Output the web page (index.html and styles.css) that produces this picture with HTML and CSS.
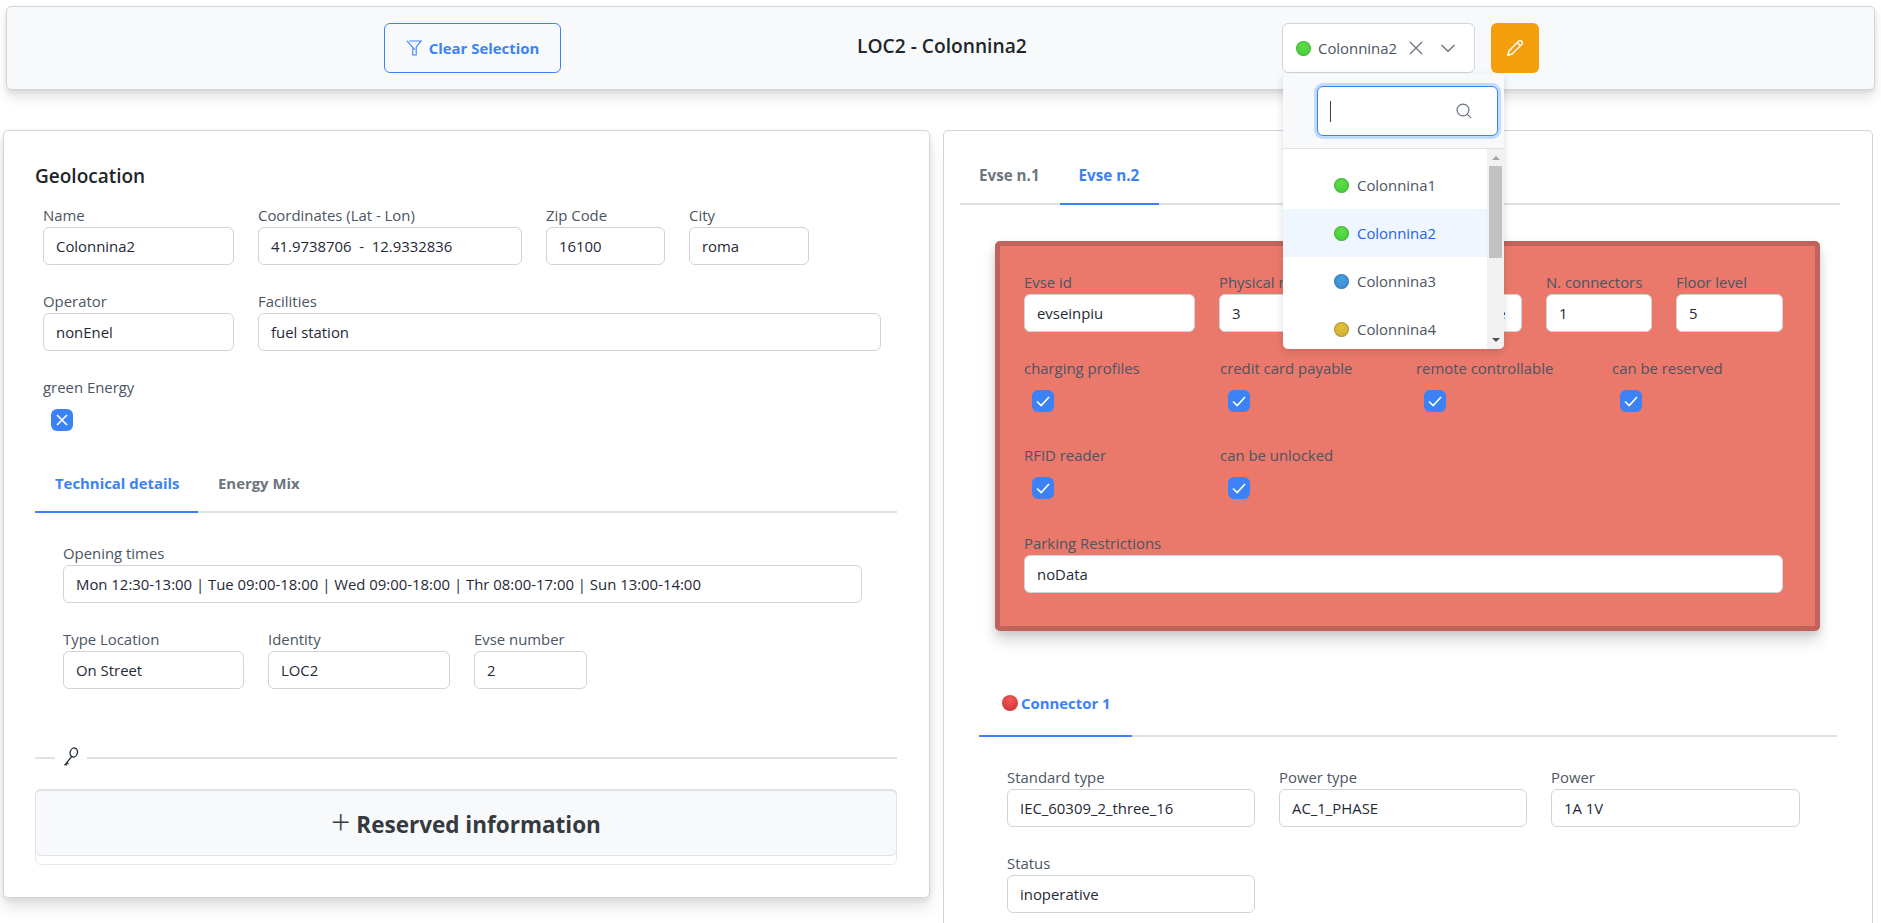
FILE: index.html
```html
<!DOCTYPE html>
<html lang="en">
  <head>
    <meta charset="utf-8" />
    <title>LOC2 - Colonnina2</title>
    <link rel="stylesheet" href="styles.css">
  </head>
  <body>
    <header class="topbar">
      <button type="button" class="btn-clear">
        <svg class="ico-filter" viewBox="0 0 16 16" width="16" height="16" fill="none" stroke="#3b82f6" stroke-width="1.1">
          <path d="M3.2 1H15L10.2 7V15H6.8V8.2" />
          <path d="M1 0.8L8.8 9.6" />
        </svg>
        Clear Selection
      </button>
      <h1 class="title">LOC2 - Colonnina2</h1>
      <div class="select-wrap">
        <div class="select">
          <span class="dot dot-green"></span>
          <span class="select-label">Colonnina2</span>
          <svg class="ico-times" viewBox="0 0 16 16" width="16" height="16" fill="none" stroke="#6b7280" stroke-width="1.3">
            <path d="M2 2L14 14M14 2L2 14" />
          </svg>
          <svg class="ico-chevron" viewBox="0 0 16 16" width="16" height="16" fill="none" stroke="#6b7280" stroke-width="1.4">
            <path d="M1.5 5L8 11.2L14.5 5" />
          </svg>
        </div>
        <div class="dropdown">
          <div class="dropdown-head">
            <div class="search">
              <span class="caret"></span>
              <svg viewBox="0 0 16 16" width="16" height="16" fill="none" stroke="#6b7280" stroke-width="1.2">
                <circle cx="7" cy="7" r="5.9" />
                <path d="M11.3 11.3L15.2 15.2" />
              </svg>
            </div>
          </div>
          <div class="dropdown-body">
            <ul class="options">
              <li class="option"><span class="dot dot-green"></span>Colonnina1</li>
              <li class="option is-selected"><span class="dot dot-green"></span>Colonnina2</li>
              <li class="option"><span class="dot dot-blue"></span>Colonnina3</li>
              <li class="option"><span class="dot dot-yellow"></span>Colonnina4</li>
            </ul>
            <div class="scrollbar">
              <span class="arrow-up"></span>
              <span class="thumb"></span>
              <span class="arrow-down"></span>
            </div>
          </div>
        </div>
      </div>
      <button type="button" class="btn-edit" aria-label="Edit">
        <svg viewBox="0 0 16 16" width="18" height="18" fill="none" stroke="#fff" stroke-width="1.3" stroke-linejoin="round">
          <path d="M1.6 14.4L2.6 10.6L11.4 1.8C12 1.2 13 1.2 13.6 1.8L14.2 2.4C14.8 3 14.8 4 14.2 4.6L5.4 13.4Z" />
          <path d="M10 3.2L12.8 6" />
        </svg>
      </button>
    </header>

    <main class="columns">
      <section class="card card-left">
        <h2 class="card-title">Geolocation</h2>
        <div class="fields">
          <div class="row">
            <div class="field w-191"><label>Name</label><div class="ctl">Colonnina2</div></div>
            <div class="field w-264"><label>Coordinates (Lat - Lon)</label><div class="ctl">41.9738706 &nbsp;-&nbsp; 12.9332836</div></div>
            <div class="field w-119"><label>Zip Code</label><div class="ctl">16100</div></div>
            <div class="field w-120"><label>City</label><div class="ctl">roma</div></div>
          </div>
          <div class="row">
            <div class="field w-191"><label>Operator</label><div class="ctl">nonEnel</div></div>
            <div class="field w-623"><label>Facilities</label><div class="ctl">fuel station</div></div>
          </div>
          <div class="check-field">
            <label>green Energy</label>
            <span class="check">
              <svg viewBox="0 0 22 22" width="22" height="22" fill="none" stroke="#fff" stroke-width="1.6"><path d="M6 6L16 16M16 6L6 16" /></svg>
            </span>
          </div>
        </div>

        <div class="tabs tabs-tech">
          <a class="tab tab-tech is-active">Technical details</a>
          <a class="tab tab-mix">Energy Mix</a>
        </div>
        <div class="tab-panel">
          <div class="field w-799"><label>Opening times</label><div class="ctl">Mon 12:30-13:00 | Tue 09:00-18:00 | Wed 09:00-18:00 | Thr 08:00-17:00 | Sun 13:00-14:00</div></div>
          <div class="row">
            <div class="field w-181"><label>Type Location</label><div class="ctl">On Street</div></div>
            <div class="field w-182"><label>Identity</label><div class="ctl">LOC2</div></div>
            <div class="field w-113"><label>Evse number</label><div class="ctl">2</div></div>
          </div>
        </div>

        <div class="divider">
          <span class="divider-icon">
            <svg viewBox="0 0 16 19" width="16" height="19" fill="none" stroke="#1f2937" stroke-width="1.3">
              <ellipse cx="10.8" cy="5.5" rx="3.6" ry="4.6" transform="rotate(15 10.8 5.5)" />
              <path d="M8.6 9.6L1.5 18.4M3.8 15.6L5.6 17M2.6 17L4 18.2" />
            </svg>
          </span>
        </div>

        <div class="accordion">
          <div class="accordion-head"><span class="plus">+</span> Reserved information</div>
        </div>
      </section>

      <section class="card card-right">
        <div class="tabs tabs-evse">
          <a class="tab tab-evse">Evse n.1</a>
          <a class="tab tab-evse is-active">Evse n.2</a>
        </div>

        <div class="evse-panel">
          <div class="row">
            <div class="field w-171"><label>Evse id</label><div class="ctl">evseinpiu</div></div>
            <div class="field w-171"><label>Physical reference</label><div class="ctl">3</div></div>
            <div class="field w-108"><label>&nbsp;</label><div class="ctl">inoperative</div></div>
            <div class="field w-106"><label>N. connectors</label><div class="ctl">1</div></div>
            <div class="field w-107"><label>Floor level</label><div class="ctl">5</div></div>
          </div>
          <div class="check-grid">
            <div class="check-field"><label>charging profiles</label><span class="check"><svg viewBox="0 0 22 22" width="22" height="22" fill="none" stroke="#fff" stroke-width="1.6"><path d="M5 11.5L9.2 15.5L17 7" /></svg></span></div>
            <div class="check-field"><label>credit card payable</label><span class="check"><svg viewBox="0 0 22 22" width="22" height="22" fill="none" stroke="#fff" stroke-width="1.6"><path d="M5 11.5L9.2 15.5L17 7" /></svg></span></div>
            <div class="check-field"><label>remote controllable</label><span class="check"><svg viewBox="0 0 22 22" width="22" height="22" fill="none" stroke="#fff" stroke-width="1.6"><path d="M5 11.5L9.2 15.5L17 7" /></svg></span></div>
            <div class="check-field"><label>can be reserved</label><span class="check"><svg viewBox="0 0 22 22" width="22" height="22" fill="none" stroke="#fff" stroke-width="1.6"><path d="M5 11.5L9.2 15.5L17 7" /></svg></span></div>
            <div class="check-field"><label>RFID reader</label><span class="check"><svg viewBox="0 0 22 22" width="22" height="22" fill="none" stroke="#fff" stroke-width="1.6"><path d="M5 11.5L9.2 15.5L17 7" /></svg></span></div>
            <div class="check-field"><label>can be unlocked</label><span class="check"><svg viewBox="0 0 22 22" width="22" height="22" fill="none" stroke="#fff" stroke-width="1.6"><path d="M5 11.5L9.2 15.5L17 7" /></svg></span></div>
          </div>
          <div class="field field-parking"><label>Parking Restrictions</label><div class="ctl">noData</div></div>
        </div>

        <div class="tabs tabs-connector">
          <a class="tab tab-connector is-active"><span class="dot dot-red"></span>Connector 1</a>
        </div>
        <div class="connector-panel">
          <div class="row">
            <div class="field w-248"><label>Standard type</label><div class="ctl">IEC_60309_2_three_16</div></div>
            <div class="field w-248"><label>Power type</label><div class="ctl">AC_1_PHASE</div></div>
            <div class="field w-249"><label>Power</label><div class="ctl">1A 1V</div></div>
          </div>
          <div class="row">
            <div class="field w-248"><label>Status</label><div class="ctl">inoperative</div></div>
          </div>
        </div>
      </section>
    </main>
  </body>
</html>
```

FILE: styles.css
```css
* {
  box-sizing: border-box;
}

html,
body {
  height: 100%;
}

body {
  margin: 0;
  padding-top: 6px;
  overflow: hidden;
  background: #fff;
  color: #1f2937;
  font-family: "Open Sans", "Noto Sans", sans-serif;
  font-size: 14.9px;
}

/* top bar */
.topbar {
  display: flex;
  align-items: center;
  width: 1869px;
  height: 84px;
  margin-left: 6px;
  padding-left: 377px;
  background: #f8f9fa;
  border: 1px solid #d1d5db;
  border-radius: 5px;
  box-shadow: 0 8px 12px rgba(0, 0, 0, 0.1), 0 2px 4px rgba(0, 0, 0, 0.08);
}

.btn-clear {
  display: flex;
  flex: none;
  align-items: center;
  justify-content: center;
  gap: 7px;
  width: 177px;
  height: 50px;
  padding: 0;
  background: transparent;
  border: 1px solid #3b82f6;
  border-radius: 6px;
  color: #3b82f6;
  font: 700 14.9px "Open Sans", sans-serif;
}

.title {
  flex: none;
  width: 170px;
  margin: 0 0 6px 296px;
  font-size: 19.2px;
  font-weight: 600;
  white-space: nowrap;
  color: #212529;
}

.select-wrap {
  position: relative;
  flex: none;
  margin-left: 255px;
}

.select {
  display: flex;
  align-items: center;
  width: 193px;
  height: 50px;
  padding-left: 13px;
  background: #fff;
  border: 1px solid #d1d5db;
  border-radius: 6px;
  color: #4b5563;
}

.select-label {
  margin-left: 7px;
}

.ico-times {
  margin-left: 11px;
}

.ico-chevron {
  margin-left: 16px;
}

.btn-edit {
  display: flex;
  flex: none;
  align-items: center;
  justify-content: center;
  width: 48px;
  height: 50px;
  margin-left: 16px;
  padding: 0;
  background: #f59e0b;
  border: 0;
  border-radius: 6px;
}

.dot {
  display: inline-block;
  flex: none;
  width: 15px;
  height: 15px;
  border-radius: 50%;
}

.dot-green {
  background: radial-gradient(circle at 50% 35%, #5fdc4c, #3ec832);
  box-shadow: inset 0 0 0 1px rgba(60, 140, 50, 0.35);
}

.dot-blue {
  background: radial-gradient(circle at 50% 35%, #44a2e0, #3a82cf);
  box-shadow: inset 0 0 0 1px rgba(50, 90, 150, 0.35);
}

.dot-yellow {
  background: radial-gradient(circle at 50% 35%, #e0c23a, #c9a936);
  box-shadow: inset 0 0 0 1px rgba(130, 110, 50, 0.35);
}

.dot-red {
  width: 16px;
  height: 16px;
  background: radial-gradient(circle at 50% 30%, #ee5a5a, #cf2a2f);
}

/* dropdown */
.dropdown {
  position: absolute;
  top: 51px;
  left: 1px;
  z-index: 10;
  width: 221px;
  height: 275px;
  overflow: hidden;
  background: #fff;
  border-radius: 0 0 5px 5px;
  box-shadow: 0 3px 8px rgba(0, 0, 0, 0.14);
}

.dropdown-head {
  display: flex;
  justify-content: flex-end;
  height: 75px;
  padding: 12px 6px 0 0;
  background: #f8f9fa;
  border-bottom: 1px solid #dee2e6;
}

.search {
  display: flex;
  align-items: center;
  justify-content: space-between;
  width: 181px;
  height: 50px;
  padding: 0 25px 0 12px;
  background: #fff;
  border: 1px solid #3b82f6;
  border-radius: 6px;
  box-shadow: 0 0 0 3px #bfdbfe;
}

.caret {
  width: 1px;
  height: 21px;
  background: #374151;
}

.dropdown-body {
  display: flex;
  height: 200px;
}

.options {
  flex: 1;
  margin: 0;
  padding: 12px 0 0;
  list-style: none;
  color: #4b5563;
}

.option {
  display: flex;
  align-items: center;
  gap: 8px;
  height: 48px;
  padding-left: 51px;
}

.option.is-selected {
  background: #eff6ff;
  color: #2563eb;
}

.scrollbar {
  display: flex;
  flex-direction: column;
  align-items: center;
  flex: none;
  width: 17px;
  padding-top: 7px;
  background: #f1f1f1;
}

.arrow-up {
  border: 4px solid transparent;
  border-top: 0;
  border-bottom: 4px solid #a3a3a3;
}

.thumb {
  width: 13px;
  height: 92px;
  margin-top: 6px;
  background: #c1c1c1;
}

.arrow-down {
  margin-top: auto;
  margin-bottom: 7px;
  border: 4px solid transparent;
  border-bottom: 0;
  border-top: 4px solid #505050;
}

/* page columns */
.columns {
  display: flex;
  align-items: flex-start;
  gap: 13px;
  margin: 40px 0 0 3px;
}

.card {
  flex: none;
  background: #fff;
  border: 1px solid #d1d5db;
  border-radius: 5px;
}

.card-left {
  width: 927px;
  height: 768px;
  padding: 33px 32px 0 31px;
  box-shadow: 0 10px 15px rgba(0, 0, 0, 0.1), 0 3px 6px rgba(0, 0, 0, 0.08);
}

.card-right {
  width: 930px;
  padding: 16px 0 0 16px;
}

.card-title {
  margin: 0 0 17px;
  font-size: 19px;
  font-weight: 600;
  line-height: 24px;
  color: #212529;
}

/* form bits */
.fields {
  padding-left: 8px;
}

.row {
  display: flex;
  gap: 24px;
  margin-bottom: 26px;
}

.field label,
.check-field label {
  display: block;
  height: 22px;
  line-height: 20px;
  color: #4b5563;
  white-space: nowrap;
}

.ctl {
  height: 38px;
  padding: 0 12px;
  overflow: hidden;
  background: #fff;
  border: 1px solid #ced4da;
  border-radius: 6px;
  line-height: 36px;
  color: #1f2937;
  white-space: nowrap;
}

.w-106 { width: 106px; }
.w-107 { width: 107px; }
.w-108 { width: 108px; }
.w-113 { width: 113px; }
.w-119 { width: 119px; }
.w-120 { width: 120px; }
.w-171 { width: 171px; }
.w-181 { width: 181px; }
.w-182 { width: 182px; }
.w-191 { width: 191px; }
.w-248 { width: 248px; }
.w-249 { width: 249px; }
.w-264 { width: 264px; }
.w-623 { width: 623px; }
.w-799 { width: 799px; }

.check {
  display: block;
  width: 22px;
  height: 22px;
  margin: 10px 0 0 8px;
  background: #3b82f6;
  border-radius: 6px;
}

.check svg {
  display: block;
}

/* tabs */
.tabs {
  display: flex;
  border-bottom: 2px solid #dee2e6;
}

.tab {
  display: flex;
  align-items: center;
  margin-bottom: -2px;
  border-bottom: 2px solid transparent;
  color: #6c757d;
  font-weight: 700;
  white-space: nowrap;
}

.tab.is-active {
  border-bottom-color: #3b82f6;
  color: #3b82f6;
}

.tabs-tech {
  width: 862px;
  height: 54px;
  margin-top: 28px;
}

.tab-tech {
  width: 163px;
  padding: 0 0 4px 20px;
}

.tab-mix {
  padding: 0 0 4px 20px;
}

.tab-panel {
  padding: 30px 0 0 28px;
}

.tab-panel > .field {
  margin-bottom: 26px;
}

.tab-panel .row {
  margin-bottom: 0;
}

.divider {
  display: flex;
  height: 2px;
  margin-top: 68px;
  background: #dee2e6;
}

.divider-icon {
  display: flex;
  align-items: center;
  justify-content: center;
  width: 32px;
  height: 20px;
  margin: -11px 0 0 20px;
  background: #fff;
}

.accordion {
  height: 76px;
  margin-top: 30px;
  border: 1px solid #e5e7eb;
  border-radius: 6px;
}

.accordion-head {
  height: 67px;
  margin: -1px;
  background: #f8f9fa;
  border: 1px solid #dee2e6;
  border-top-width: 2px;
  border-radius: 6px;
  font-size: 22.5px;
  font-weight: 700;
  line-height: 68px;
  text-align: center;
  color: #343a40;
}

.plus {
  font-size: 34px;
  font-weight: 300;
  line-height: 20px;
  vertical-align: -2px;
}

/* right card */
.tabs-evse {
  width: 880px;
  height: 58px;
}

.tab-evse {
  padding: 0 20px 0 19px;
  font-size: 15.2px;
}

.evse-panel {
  width: 825px;
  height: 390px;
  margin: 36px 0 0 35px;
  padding: 26px 0 0 24px;
  background: #ea796b;
  border: 5px solid #bf645c;
  border-radius: 5px;
  box-shadow: 0 10px 15px rgba(0, 0, 0, 0.15), 0 3px 6px rgba(0, 0, 0, 0.1);
}

.check-grid {
  display: grid;
  grid-template-columns: repeat(4, 196px);
  row-gap: 33px;
}

.field-parking {
  width: 759px;
  margin-top: 34px;
}

.tabs-connector {
  width: 858px;
  height: 57px;
  margin: 49px 0 0 19px;
}

.tab-connector {
  gap: 3px;
  width: 153px;
  padding-left: 23px;
  padding-bottom: 10px;
}

.connector-panel {
  padding: 30px 0 0 47px;
}
```
